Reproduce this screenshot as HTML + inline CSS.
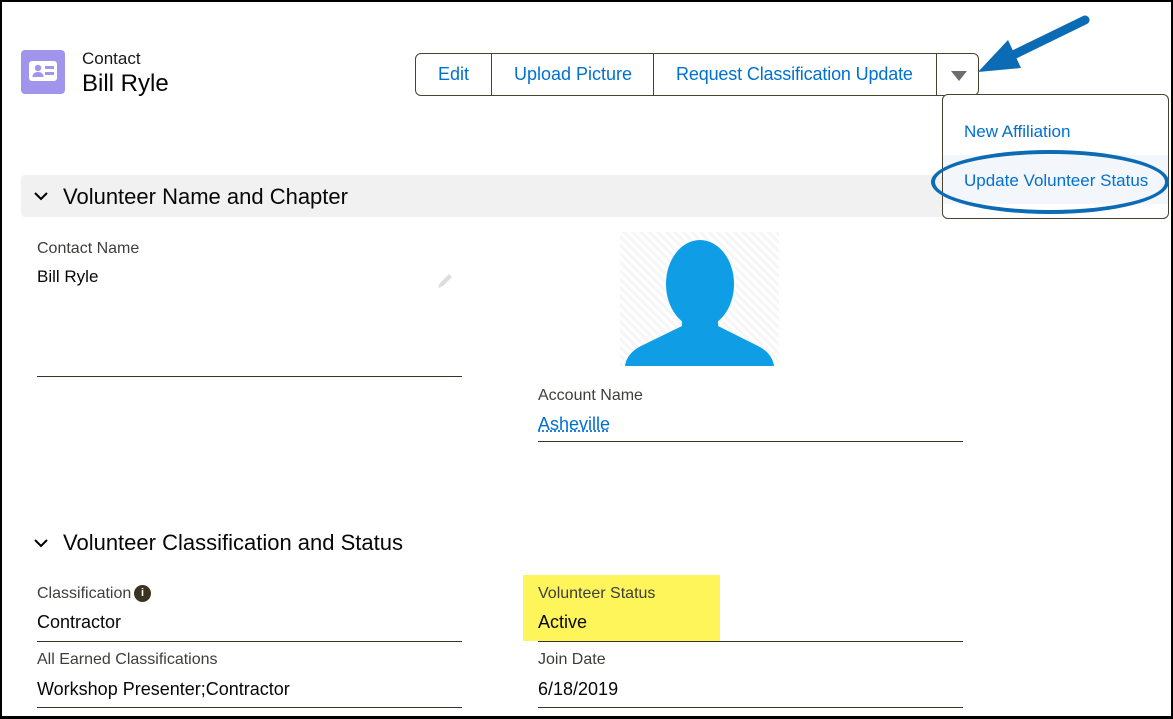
<!DOCTYPE html>
<html><head><style>
*{margin:0;padding:0;box-sizing:border-box}
body{width:1173px;height:719px;background:#fff;font-family:"Liberation Sans",Arial,sans-serif;position:relative;overflow:hidden}
.frame{position:absolute;left:0;top:0;width:1173px;height:719px;border:2px solid #000;border-bottom-width:3px}
.a{position:absolute;white-space:nowrap}
.lbl{font-size:16px;color:#3e3e3c}
.val{font-size:18px;color:#080707}
.line{position:absolute;height:1px;background:#3b3322}
</style></head><body>
<div class="frame"></div>
<div class="a" style="left:21px;top:50px;width:44px;height:44px;background:#a094ed;border-radius:4px"></div>
<svg class="a" style="left:29px;top:61px" width="28" height="20" viewBox="0 0 28 20"><rect x="0" y="0" width="28" height="20" rx="3" fill="#fff"/><circle cx="9" cy="7" r="3.2" fill="#a094ed"/><path d="M3.5 16c0-3.5 2.5-5 5.5-5s5.5 1.5 5.5 5z" fill="#a094ed"/><rect x="16" y="5" width="9" height="3" fill="#a094ed"/><rect x="16" y="11" width="9" height="3" fill="#a094ed"/></svg>
<div class="a" style="left:82px;top:49px;font-size:17px;color:#181818">Contact</div>
<div class="a" style="left:82px;top:70px;font-size:24px;color:#080707">Bill Ryle</div>

<div class="a" style="left:415px;top:53px;width:564px;height:43px;border:1px solid #4a4230;border-radius:6px"></div>
<div class="a" style="left:491px;top:53px;width:1px;height:43px;background:#4a4230"></div>
<div class="a" style="left:653px;top:53px;width:1px;height:43px;background:#4a4230"></div>
<div class="a" style="left:936px;top:53px;width:1px;height:43px;background:#4a4230"></div>
<div class="a" style="left:438px;top:64px;font-size:18px;color:#0070d2">Edit</div>
<div class="a" style="left:514px;top:64px;font-size:18px;color:#0070d2">Upload Picture</div>
<div class="a" style="left:676px;top:64px;font-size:18px;color:#0070d2;letter-spacing:-0.15px">Request Classification Update</div>
<svg class="a" style="left:950px;top:70px" width="18" height="12"><path d="M1 1h16l-8 10z" fill="#706e6b"/></svg>
<svg class="a" style="left:975px;top:14px" width="120" height="64"><path d="M110 6L32 44" stroke="#0b6bb5" stroke-width="9" stroke-linecap="round"/><path d="M3 58L46 54L33 26z" fill="#0b6bb5"/></svg>

<div class="a" style="left:21px;top:175px;width:1000px;height:42px;background:#f1f1f1;border-radius:4px"></div>
<svg class="a" style="left:33px;top:190px" width="16" height="12"><path d="M2 3l6 6 6-6" stroke="#000" stroke-width="2" fill="none"/></svg>
<div class="a" style="left:63px;top:184px;font-size:22px;color:#080707">Volunteer Name and Chapter</div>

<div class="a" style="left:942px;top:94px;width:227px;height:125px;border:1px solid #4a4230;border-radius:6px;background:#fff"></div>
<div class="a" style="left:943px;top:155px;width:225px;height:49px;background:#f3f6fa"></div>
<div class="a" style="left:964px;top:122px;font-size:17px;color:#0070d2">New Affiliation</div>
<div class="a" style="left:964px;top:171px;font-size:17px;color:#0070d2">Update Volunteer Status</div>
<div class="a" style="left:931px;top:150px;width:238px;height:64px;border:4px solid #0b6bb5;border-radius:50%"></div>

<div class="a lbl" style="left:37px;top:240px">Contact Name</div>
<div class="a val" style="left:37px;top:267px;font-size:17px">Bill Ryle</div>
<svg class="a" style="left:436px;top:272px" width="18" height="18"><path d="M2 16l2-5 9-9 3 3-9 9z" fill="#ddd"/></svg>
<div class="line" style="left:37px;top:376px;width:425px"></div>

<div class="a" style="left:620px;top:232px;width:159px;height:134px;background:repeating-linear-gradient(45deg,#f6f6f6 0 3px,#fff 3px 6px)"></div>
<svg class="a" style="left:620px;top:232px" width="159" height="134" viewBox="0 0 159 134"><ellipse cx="80" cy="52" rx="34" ry="44" fill="#0f9ee6"/><path d="M62 86h36v8l40 20c10 5 15 12 16 20H5c1-8 6-15 16-20l41-20z" fill="#0f9ee6"/></svg>

<div class="a lbl" style="left:538px;top:387px">Account Name</div>
<div class="a" style="left:538px;top:414px;font-size:18px;color:#0070d2;text-decoration:underline;text-decoration-style:dotted">Asheville</div>
<div class="line" style="left:538px;top:441px;width:425px"></div>

<svg class="a" style="left:33px;top:537px" width="16" height="12"><path d="M2 3l6 6 6-6" stroke="#000" stroke-width="2" fill="none"/></svg>
<div class="a" style="left:63px;top:530px;font-size:22px;color:#080707">Volunteer Classification and Status</div>

<div class="a" style="left:523px;top:575px;width:197px;height:66px;background:#fef55a"></div>
<div class="a lbl" style="left:37px;top:585px">Classification</div>
<div class="a" style="left:134px;top:585px;width:17px;height:17px;border-radius:50%;background:#3b3322;color:#fff;font-size:11px;font-weight:bold;text-align:center;line-height:17px">i</div>
<div class="a val" style="left:37px;top:612px">Contractor</div>
<div class="line" style="left:37px;top:641px;width:425px"></div>
<div class="a lbl" style="left:538px;top:585px">Volunteer Status</div>
<div class="a val" style="left:538px;top:612px">Active</div>
<div class="line" style="left:538px;top:641px;width:425px"></div>

<div class="a lbl" style="left:37px;top:651px">All Earned Classifications</div>
<div class="a val" style="left:37px;top:679px">Workshop Presenter;Contractor</div>
<div class="line" style="left:37px;top:707px;width:425px"></div>
<div class="a lbl" style="left:538px;top:651px">Join Date</div>
<div class="a val" style="left:538px;top:679px">6/18/2019</div>
<div class="line" style="left:538px;top:707px;width:425px"></div>
</body></html>
